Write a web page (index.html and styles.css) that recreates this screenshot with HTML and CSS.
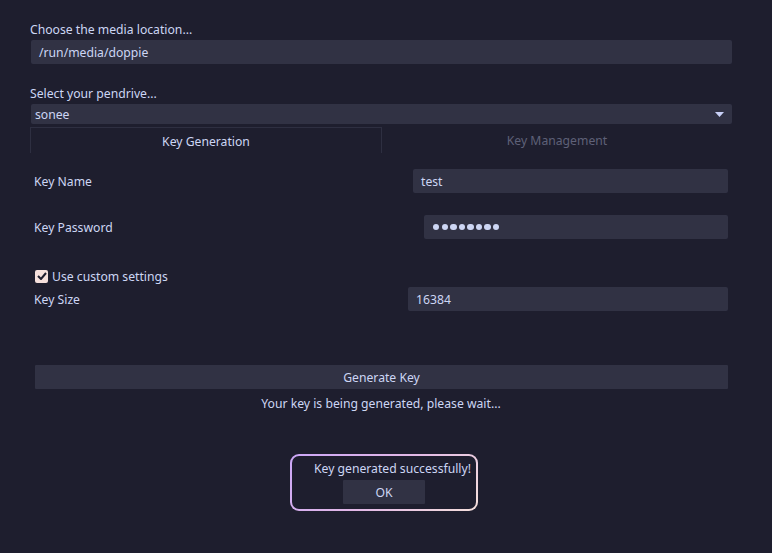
FILE: index.html
```html
<!DOCTYPE html>
<html>
<head>
<meta charset="utf-8">
<link rel="stylesheet" href="styles.css">
</head>
<body>
<div class="app">
  <div class="label first">Choose the media location...</div>
  <div class="field path">/run/media/doppie</div>
  <div class="label second">Select your pendrive...</div>
  <div class="field combo"><span>sonee</span><svg class="arrow" width="9" height="5" viewBox="0 0 9 5"><path d="M0 0H9L4.5 5Z" fill="#c9d0f7"/></svg></div>
  <div class="tabs">
    <div class="tab active">Key Generation</div>
    <div class="tab inactive">Key Management</div>
  </div>
  <div class="panel">
    <div class="row r1"><span class="rlabel">Key Name</span><div class="field input in-name">test</div></div>
    <div class="row r2"><span class="rlabel">Key Password</span><div class="field input in-pass" title="password"><span class="dot"></span><span class="dot"></span><span class="dot"></span><span class="dot"></span><span class="dot"></span><span class="dot"></span><span class="dot"></span><span class="dot"></span></div></div>
    <div class="check-row"><span class="check"><svg width="10" height="8" viewBox="0 0 10 8"><path d="M1 4L4 7L9 1" stroke="#1e1e2e" stroke-width="2" fill="none"/></svg></span><span>Use custom settings</span></div>
    <div class="row r3"><span class="rlabel">Key Size</span><div class="field input in-size">16384</div></div>
    <div class="button gen">Generate Key</div>
    <div class="status">Your key is being generated, please wait...</div>
    <div class="popup-wrap">
      <div class="popup">
        <div class="popup-inner">
          <div class="ptext">Key generated successfully!</div>
          <div class="button ok">OK</div>
        </div>
      </div>
    </div>
  </div>
</div>
</body>
</html>
```
FILE: styles.css
```css
html, body {
  margin: 0;
  padding: 0;
  background: #1e1e2e;
}
body {
  width: 772px;
  height: 553px;
  overflow: hidden;
  font-family: "Noto Sans", "DejaVu Sans", sans-serif;
  font-size: 12.2px;
  color: #cdd6f4;
}
.app {
  padding: 0 40px 0 30px;
  display: flex;
  flex-direction: column;
}
.label {
  height: 18px;
  line-height: 18px;
}
.label.first { margin-top: 21px; margin-bottom: 1px; }
.label.second { margin-top: 21px; margin-bottom: 1px; }
.field {
  background: #313244;
  border-radius: 2px;
  line-height: 23px;
  padding-top: 1px;
  height: 24px;
  box-sizing: border-box;
}
.path {
  margin-left: 1px;
  padding-left: 8px;
}
.combo {
  margin-left: 1px;
  height: 20px;
  line-height: 19px;
  padding: 1px 8px 0 4px;
  display: flex;
  justify-content: space-between;
  align-items: center;
}
.arrow { display: block; margin-top: 0; }
.tabs {
  display: flex;
  margin-top: 3px;
  height: 26px;
}
.tab {
  flex: 1;
  text-align: center;
  line-height: 25px;
  padding-top: 1px;
  box-sizing: border-box;
}
.tab.active {
  border: 1px solid #2e2f41;
  border-bottom: none;
  flex: 0 0 352px;
}
.tab.inactive {
  color: #5f6178;
}
.panel {
  display: flex;
  flex-direction: column;
  padding: 16px 4px 0 4px;
}
.row {
  display: flex;
  justify-content: space-between;
  align-items: center;
  height: 24px;
}
.rlabel { padding-top: 1px; }
.r2 { margin-top: 22px; }
.r3 { margin-top: 2px; }
.input {
  padding-left: 8px;
}
.in-name { width: 315px; }
.in-pass {
  width: 304px;
  padding-left: 9px;
  padding-top: 0;
  display: flex;
  align-items: center;
  gap: 2.2px;
}
.dot {
  width: 6.4px;
  height: 6.4px;
  border-radius: 50%;
  background: #cdd6f4;
}
.in-size { width: 320px; }
.check-row {
  display: flex;
  align-items: center;
  gap: 4px;
  margin-top: 28px;
  margin-left: 1px;
  height: 18px;
}
.check {
  width: 13px;
  height: 13px;
  background: #f5e0dc;
  border-radius: 2px;
  display: flex;
  align-items: center;
  justify-content: center;
}
.button {
  background: #313244;
  text-align: center;
  height: 24px;
  line-height: 23px;
  padding-top: 1px;
  box-sizing: border-box;
  border-radius: 1px;
}
.gen {
  margin-top: 54px;
  margin-left: 1px;
}
.status {
  text-align: center;
  margin-top: 3px;
  height: 24px;
  line-height: 24px;
}
.popup-wrap {
  display: flex;
  justify-content: center;
  margin-top: 38px;
  padding-left: 6px;
}
.popup {
  width: 188px;
  height: 57px;
  box-sizing: border-box;
  padding: 2px;
  border-radius: 9px;
  background: linear-gradient(135deg, #cba6f7 0%, #e2b8e6 50%, #f5e0dc 100%);
}
.popup-inner {
  background: #1e1e2e;
  border-radius: 7px;
  height: 100%;
  display: flex;
  flex-direction: column;
  align-items: flex-end;
  padding: 4px 5px 0 0;
  box-sizing: border-box;
}
.ptext {
  height: 18px;
  line-height: 18px;
}
.ok {
  width: 82px;
  margin-top: 2px;
  margin-right: 46px;
}
```
